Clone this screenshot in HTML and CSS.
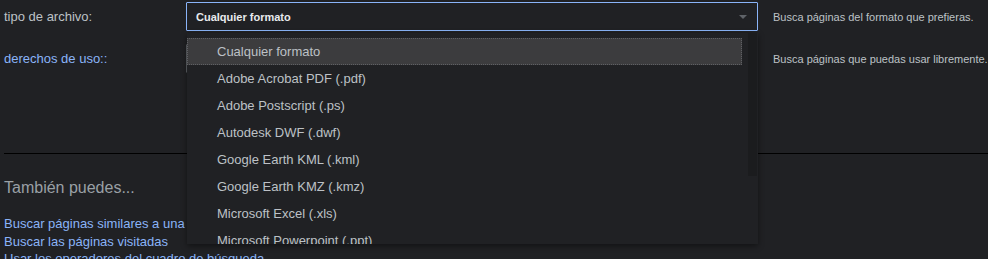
FILE: index.html
```html
<!DOCTYPE html>
<html lang="es">
<head>
<meta charset="utf-8">
<title>Búsqueda avanzada</title>
<link rel="stylesheet" href="styles.css">
</head>
<body>
<div class="page">
  <div class="form">
    <div class="row">
      <div class="label">tipo de archivo:</div>
      <div class="field">
        <div class="select focused"><span class="value">Cualquier formato</span><span class="arrow"></span></div>
        <div class="dropdown">
          <ul class="options">
            <li class="option active">Cualquier formato</li>
            <li class="option">Adobe Acrobat PDF (.pdf)</li>
            <li class="option">Adobe Postscript (.ps)</li>
            <li class="option">Autodesk DWF (.dwf)</li>
            <li class="option">Google Earth KML (.kml)</li>
            <li class="option">Google Earth KMZ (.kmz)</li>
            <li class="option">Microsoft Excel (.xls)</li>
            <li class="option">Microsoft Powerpoint (.ppt)</li>
            <li class="option">Microsoft Word (.doc)</li>
          </ul>
          <div class="scrollbar"><div class="thumb"></div></div>
        </div>
      </div>
      <div class="desc">Busca páginas del formato que prefieras.</div>
    </div>
    <div class="row">
      <div class="label link">derechos de uso::</div>
      <div class="field">
        <div class="select"><span class="value">sin filtrar por licencia</span><span class="arrow"></span></div>
      </div>
      <div class="desc">Busca páginas que puedas usar libremente.</div>
    </div>
  </div>
  <hr class="divider">
  <h3 class="more">También puedes...</h3>
  <ul class="links">
    <li><a href="#">Buscar páginas similares a una URL</a></li>
    <li><a href="#">Buscar las páginas visitadas</a></li>
    <li><a href="#">Usar los operadores del cuadro de búsqueda</a></li>
  </ul>
</div>
</body>
</html>
```
FILE: styles.css
```css
* { box-sizing: border-box; }
html, body {
  margin: 0;
  padding: 0;
  background: #202124;
  overflow: hidden;
}
body {
  font-family: "Liberation Sans", Arial, sans-serif;
  color: #bdc1c6;
}
.page {
  padding: 2px 0 0 4px;
}
.form {
  display: flex;
  flex-direction: column;
  gap: 13px;
}
.row {
  display: grid;
  grid-template-columns: 182px 572px 1fr;
  align-items: center;
  height: 29px;
}
.label {
  font-size: 13px;
  color: #bdc1c6;
  white-space: nowrap;
}
.label.link { color: #8ab4f8; }
.field {
  position: relative;
  height: 29px;
}
.select {
  height: 29px;
  border: 1px solid #5f6368;
  border-radius: 1px;
  background: #202124;
  display: flex;
  align-items: center;
  justify-content: space-between;
  padding: 0 9px 0 9px;
}
.select.focused { border-color: #8ab4f8; }
.value {
  font-size: 11px;
  font-weight: bold;
  color: #e8eaed;
}
.arrow {
  width: 0;
  height: 0;
  border-left: 4px solid transparent;
  border-right: 4px solid transparent;
  border-top: 4px solid #5f6368;
  margin-right: 1px;
}
.desc {
  font-size: 11px;
  color: #bdc1c6;
  white-space: nowrap;
  padding-left: 15px;
}
.dropdown {
  position: absolute;
  top: 31px;
  left: 1px;
  width: 571px;
  height: 211px;
  background: #202124;
  box-shadow: 0 2px 6px rgba(0, 0, 0, 0.45);
  overflow: hidden;
  z-index: 5;
  display: flex;
}
.options {
  list-style: none;
  margin: 0;
  padding: 5px 0 0 0;
  width: 555px;
}
.option {
  height: 27px;
  line-height: 27px;
  padding-left: 30px;
  font-size: 13px;
  color: #bdc1c6;
  white-space: nowrap;
}
.option.active {
  background: #3c3c3e;
  outline: 1px dotted #5f6064;
  outline-offset: -1px;
  color: #bdc1c6;
}
.scrollbar {
  margin-left: auto;
  margin-right: 1px;
  width: 9px;
  height: 100%;
}
.thumb {
  height: 143px;
  background: #1b1c1e;
}
.divider {
  border: 0;
  border-top: 1px solid #000;
  margin: 80px 0 0 0;
  height: 0;
}
.more {
  font-size: 16px;
  font-weight: normal;
  color: #9aa0a6;
  margin: 24px 0 0 0;
  line-height: 20px;
}
.links {
  list-style: none;
  margin: 17px 0 0 0;
  padding: 0;
}
.links li {
  font-size: 13px;
  line-height: 17.5px;
}
.links a {
  color: #8ab4f8;
  text-decoration: none;
}
```
